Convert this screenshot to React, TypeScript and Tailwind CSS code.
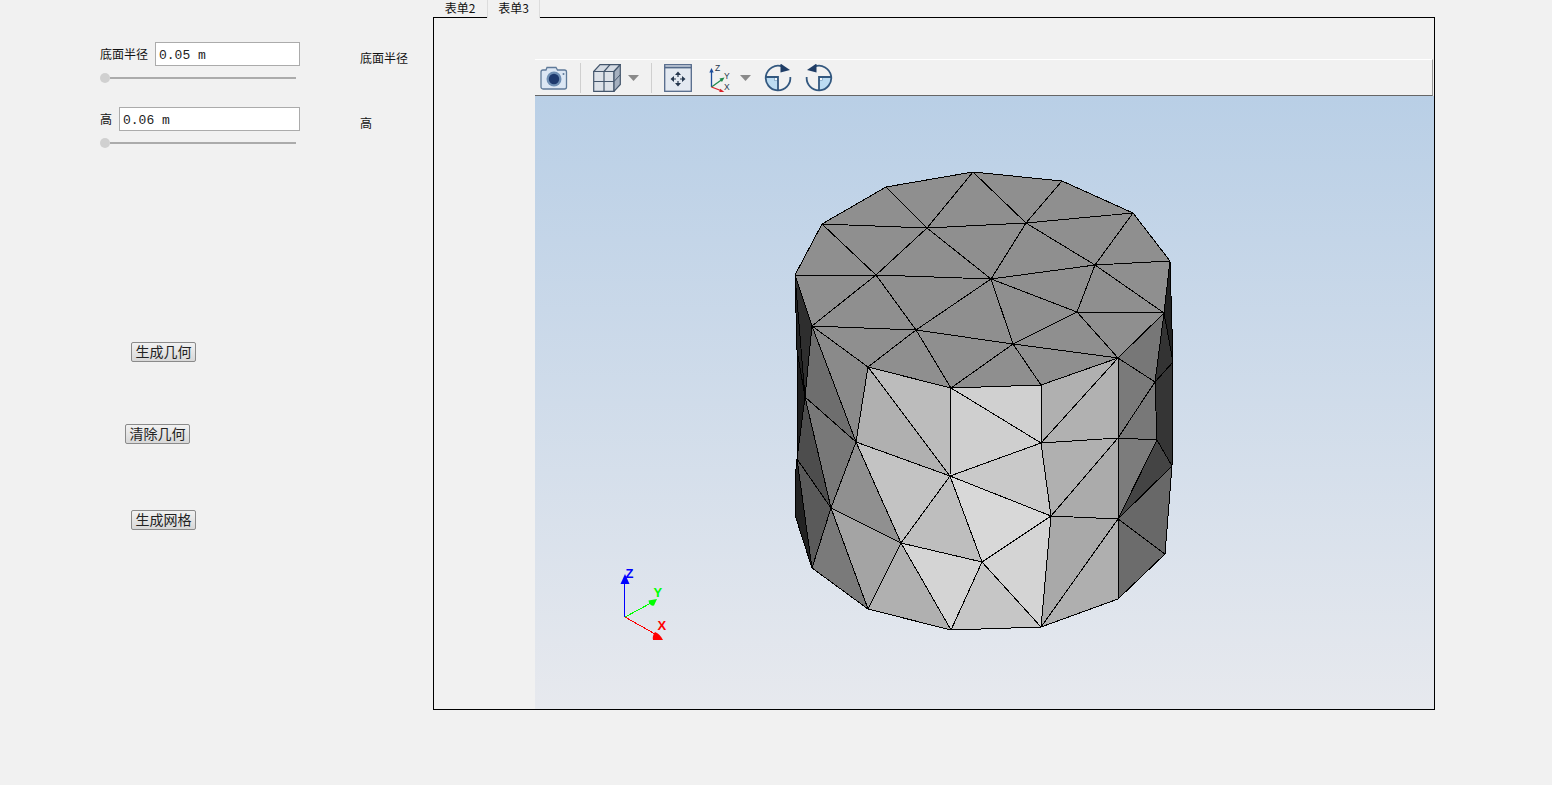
const V: Record<string, [number, number]> = {
  A: [795, 275], B: [822, 224], C: [886, 187], D: [973, 172], E: [1062, 181], F: [1133, 213], G: [1170, 261],
  H: [1164, 313], I: [1118, 358], J: [1041, 385], K: [951, 388], L: [868, 367], M: [812, 326],
  N: [927, 228], O: [1026, 223], P: [876, 275], Q: [991, 279], R: [1095, 265], S: [1077, 312], T: [916, 330], U: [1013, 344],
  a: [812, 568], b: [868, 609], c: [951, 630], d: [1041, 627], e: [1118, 599], f: [1165, 554],
  g1: [856, 442], g2: [950, 476], g3: [1041, 443], g4: [1118, 438], g5: [1157, 440], g6: [1051, 516], g7: [1118, 519],
  g8: [831, 508], g9: [901, 543], g10: [982, 562], g11: [805, 397], g12: [797, 459], g13: [1155, 382], g14: [1172, 466], g15: [1173, 362],
  h: [795, 515], h2: [795, 480], w: [797, 350],
}

const TOP = 'C D N,D O N,D E O,E F O,F R O,F G R,G H R,R H S,H I S,S I U,I J U,U J K,U K T,T K L,T L M,M P T,A P M,A B P,B N P,B C N,N O Q,N Q P,O R Q,R S Q,Q S U,Q U T,P Q T'

const SIDES: [string, string][] = [
  ['K J g3', '#d0d0d0'], ['K g3 g2', '#cfcfcf'], ['L K g2', '#bcbcbc'], ['L g2 g1', '#b0b0b0'],
  ['g1 g2 g9', '#c3c3c3'], ['g2 g3 g6', '#c9c9c9'], ['g2 g6 g10', '#d8d8d8'], ['g2 g10 g9', '#bebebe'],
  ['g9 g10 c', '#d4d4d4'], ['g9 c b', '#b0b0b0'], ['g10 c d', '#c6c6c6'], ['g10 g6 d', '#d4d4d4'],
  ['g6 g7 d', '#a9a9a9'], ['d e g7', '#afafaf'], ['g3 g4 g6', '#b0b0b0'], ['g4 g7 g6', '#ababab'],
  ['J I g3', '#b0b0b0'], ['g3 I g4', '#b1b1b1'],
  ['I g13 g4', '#7a7a7a'], ['g4 g13 g5', '#787878'], ['g4 g5 g7', '#7c7c7c'], ['g5 g14 g7', '#444444'],
  ['g7 g14 f', '#686868'], ['g7 f e', '#6c6c6c'], ['I H g13', '#777777'], ['G H g15', '#222222'],
  ['H g13 g15', '#333333'], ['g13 g15 g14 g5', '#353535'],
  ['M L g1', '#8a8a8a'], ['M g1 g11', '#6e6e6e'], ['g11 g1 g8', '#787878'], ['g1 g8 g9', '#909090'],
  ['g8 g9 b', '#a4a4a4'], ['g8 a b', '#7a7a7a'], ['g12 g8 a', '#5a5a5a'], ['g11 g12 g8', '#4d4d4d'],
  ['h2 h a g12', '#222222'], ['A M g11', '#2e2e2e'], ['w g11 g12', '#1c1c1c'], ['A g11 w', '#222222'],
]

function pts(names: string) {
  return names.split(' ').map((n) => V[n].join(',')).join(' ')
}

function Slider() {
  return (
    <div className="mt-[7px] flex h-[10px] w-[196px] items-center">
      <div className="h-[10px] w-[10px] rounded-full bg-[#d0d0d0]" />
      <div className="h-[2px] flex-1 bg-[#ababab]" />
    </div>
  )
}

function Field({ label, value }: { label: string; value: string }) {
  return (
    <div className="flex h-[24px] w-[200px] items-center gap-[7px]">
      <span className="text-[12px] leading-[16px] text-[#111]">{label}</span>
      <input
        readOnly
        value={value}
        className="h-[24px] min-w-0 flex-1 border border-[#ababab] bg-white px-[3px] pt-[2px] font-['Liberation_Mono',monospace] text-[13px] text-[#222] outline-none"
      />
    </div>
  )
}

function CmdButton({ label, className }: { label: string; className: string }) {
  return (
    <button
      className={`block h-[20px] w-[65px] rounded-[2px] border border-[#8a8a8a] bg-linear-to-b from-[#f2f2f2] to-[#d8d8d8] pb-[2px] text-center text-[14px] leading-[16px] text-[#222] ${className}`}
    >
      {label}
    </button>
  )
}

function Sep() {
  return <div className="ml-[12px] h-[30px] w-px bg-[#cfcfcf]" />
}

function Caret({ className }: { className: string }) {
  return (
    <svg width="11" height="6" viewBox="0 0 11 6" className={className}>
      <path d="M0 0h11L5.500 6z" fill="#8a8a8a" />
    </svg>
  )
}

function CameraIcon() {
  return (
    <svg width="28" height="28" viewBox="0 0 28 28" className="ml-[5px]">
      <path d="M1 8a2 2 0 0 1 2-2h3l1-2.500h9l1.500 2.500h7a2 2 0 0 1 2 2v15a2 2 0 0 1-2 2H3a2 2 0 0 1-2-2z" fill="#dce7f4" stroke="#5f7a99" strokeWidth="1.300" />
      <circle cx="14" cy="15" r="7.500" fill="#6f8fb4" />
      <circle cx="14" cy="15" r="5.200" fill="#1e3a6e" />
      <circle cx="23.500" cy="10" r="1" fill="#5f7a99" />
    </svg>
  )
}

function CubeIcon() {
  return (
    <svg width="28" height="28" viewBox="0 0 28 28" className="ml-[12px]">
      <path d="M0.700 7.500L7 0.700h20.300L21 7.500z" fill="#d5dbe3" stroke="#44566c" strokeWidth="1.200" />
      <path d="M21 7.500H0.700v19.800H21z" fill="#dde2e9" />
      <path d="M21 7.500H0.700v19.800H21zM11 7.500v19.800M0.700 17.500H21M17 0.700L11 7.500" fill="none" stroke="#44566c" strokeWidth="1.200" />
      <path d="M21 7.500l6.300-6.800v19.800L21 27.300z" fill="#a5b0bf" stroke="#44566c" strokeWidth="1.200" />
      <path d="M21 17.500l6.300-6.800" stroke="#44566c" strokeWidth="1" />
    </svg>
  )
}

function FitIcon() {
  return (
    <svg width="28" height="28" viewBox="0 0 28 28" className="ml-[12px]">
      <rect x="0.700" y="0.700" width="26.600" height="26.600" fill="#e3e9f1" stroke="#53698a" strokeWidth="1.300" />
      <path d="M0.700 3.500h26.600" stroke="#53698a" strokeWidth="1.800" />
      <path d="M14 10.500v2.500M14 17v2.500M9.500 15h2.500M16 15h2.500" stroke="#26384f" strokeWidth="1.200" />
      <path d="M14 7.500l-3 3.500h6zM14 22.500l-3-3.500h6zM6.500 15l3.500-3v6zM21.500 15l-3.500-3v6z" fill="#26384f" />
    </svg>
  )
}

function AxesIcon() {
  return (
    <svg width="24" height="28" viewBox="0 0 24 28" className="ml-[17px]">
      <path d="M2.500 23V7" stroke="#1c4d9c" strokeWidth="1.300" />
      <path d="M2.500 4l-2.200 4.500h4.400z" fill="#1c4d9c" />
      <path d="M2.500 23L13 15.500" stroke="#1f8a4c" strokeWidth="1.300" />
      <path d="M15.500 13.500l-5 1 2.400 3.500z" fill="#1f8a4c" />
      <path d="M2.500 23L13 27" stroke="#d8232a" strokeWidth="1.300" />
      <path d="M16 28.500l-4.800-3.800-1 3.800z" fill="#d8232a" />
      <text x="6" y="7" fontSize="8.500" fontFamily="Liberation Sans, sans-serif" fill="#26384f">Z</text>
      <text x="15" y="14.500" fontSize="8.500" fontFamily="Liberation Sans, sans-serif" fill="#26384f">Y</text>
      <text x="15" y="26" fontSize="8.500" fontFamily="Liberation Sans, sans-serif" fill="#26384f">X</text>
    </svg>
  )
}

function RotateIcon({ flip }: { flip?: boolean }) {
  return (
    <svg width="28" height="28" viewBox="0 0 28 28" className={`ml-[13px] ${flip ? '-scale-x-100' : ''}`}>
      <path d="M2 13h12v13.500A12.500 12.500 0 0 1 2 13z" fill="#bcdcf2" />
      <rect x="10.500" y="13.500" width="3" height="3" fill="#f4f9fd" stroke="#6d94b8" strokeWidth="0.600" />
      <path d="M18 2.400A12.300 12.300 0 1 0 26.300 13M1.700 13H14v13" fill="none" stroke="#33587f" strokeWidth="1.800" />
      <path d="M16.500 -0.500L26 6 16.500 8.500z" fill="#1f3d66" />
    </svg>
  )
}

function Viewport() {
  return (
    <svg width="899" height="613" viewBox="535 96 899 613" className="block bg-linear-to-b from-[#b9cfe6] to-[#e7e9ee]">
      <g stroke="#000" strokeWidth="1" strokeLinejoin="round" shapeRendering="crispEdges">
        {SIDES.map(([p, fill]) => (
          <polygon key={p} points={pts(p)} fill={fill} />
        ))}
        {TOP.split(',').map((p) => (
          <polygon key={p} points={pts(p)} fill="#8f8f8f" />
        ))}
      </g>
      <g shapeRendering="crispEdges">
        <path d="M624.500 617V582" stroke="#0000ff" strokeWidth="1" />
        <path d="M625 617L651 603" stroke="#00ff00" strokeWidth="1" />
        <path d="M625 617L655 634" stroke="#ff0000" strokeWidth="1" />
      </g>
      <path d="M625 574l-4.500 10h9z" fill="#0000ff" />
      <path d="M648.500 600.500L657 599 654 605.500Q649.500 606.500 648.500 600.500z" fill="#00ff00" />
      <path d="M655 632Q660 634 663 640L653 640Q652 636 655 632z" fill="#ff0000" />
      <g fontFamily="Liberation Sans, sans-serif" fontSize="13" fontWeight="700">
        <text x="625.500" y="578" fill="#0000ff">Z</text>
        <text x="653.500" y="597" fill="#00ff00">Y</text>
        <text x="657.500" y="630" fill="#ff0000">X</text>
      </g>
    </svg>
  )
}

export default function App() {
  return (
    <div className="flex h-[785px] w-[1552px] overflow-hidden bg-[#f1f1f1] font-['Noto_Sans_CJK_SC','Liberation_Sans',sans-serif] text-[#111]">
      <div className="flex w-[433px] shrink-0">
        <div className="ml-[100px] w-[200px] pt-[42px]">
          <Field label="底面半径" value="0.05 m" />
          <Slider />
          <div className="mt-[24px]">
            <Field label="高" value="0.06 m" />
          </div>
          <Slider />
          <CmdButton label="生成几何" className="ml-[31px] mt-[194px]" />
          <CmdButton label="清除几何" className="ml-[25px] mt-[62px]" />
          <CmdButton label="生成网格" className="ml-[31px] mt-[66px]" />
        </div>
        <div className="ml-[60px] pt-[50px] text-[12px] leading-[16px]">
          <div>底面半径</div>
          <div className="mt-[49px]">高</div>
        </div>
      </div>

      <div className="w-[1002px]">
        <div className="flex h-[17px] pt-px text-[12px] leading-[13px]">
          <div className="w-[54px] text-center">表单2</div>
          <div className="relative z-10 -mt-px h-[18px] w-[53px] border-x border-[#dcdcdc] bg-[#f1f1f1] pt-px text-center">表单3</div>
        </div>
        <div className="h-[693px] border border-black pl-[101px] pt-[41px]">
          <div className="flex h-[37px] w-[898px] items-center border-r border-t border-b border-r-[#9a9a9a] border-t-white border-b-[#666] bg-[#f1f1f1]">
            <CameraIcon />
            <Sep />
            <CubeIcon />
            <Caret className="ml-[7px]" />
            <Sep />
            <FitIcon />
            <AxesIcon />
            <Caret className="ml-[7px]" />
            <RotateIcon />
            <RotateIcon flip />
          </div>
          <Viewport />
        </div>
      </div>
    </div>
  )
}
